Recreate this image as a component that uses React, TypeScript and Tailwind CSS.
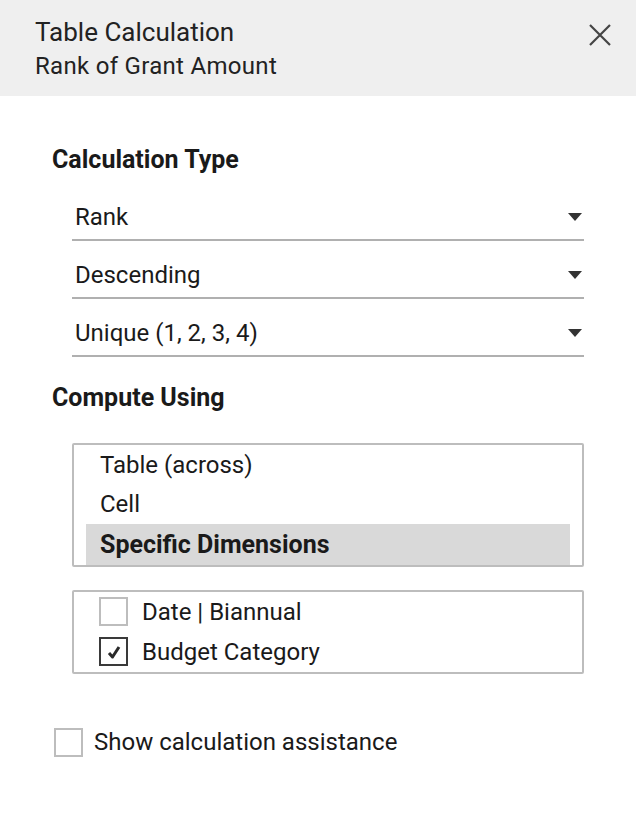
import React from "react";

function Caret() {
  return (
    <svg width="14" height="8" viewBox="0 0 14 8" className="shrink-0 mb-[11px]">
      <path d="M0 0 L14 0 L7 8 Z" fill="#333" />
    </svg>
  );
}

function Select({ label }: { label: string }) {
  return (
    <div className="flex items-end justify-between h-[58px] border-b-[2px] border-[#b0b0b0] pl-[3px] pr-[2px] pb-[7px]">
      <span className="text-[24px] leading-[30px] text-[#1a1a1a]">{label}</span>
      <Caret />
    </div>
  );
}

function Check({ checked }: { checked?: boolean }) {
  return (
    <div
      className={
        "w-[29px] h-[29px] flex items-center justify-center shrink-0 bg-white border-2 " +
        (checked ? "border-[#3a3a3a]" : "border-[#bdbdbd]")
      }
    >
      {checked && (
        <svg width="18" height="16" viewBox="0 0 18 16">
          <path d="M4 9 L7.5 13 L14 3" fill="none" stroke="#2a2a2a" strokeWidth="3" strokeLinejoin="round" />
        </svg>
      )}
    </div>
  );
}

export default function App() {
  return (
    <div
      className="w-[636px] h-[818px] bg-white text-[#1a1a1a]"
      style={{ fontFamily: "Roboto, 'Liberation Sans', sans-serif" }}
    >
      <div className="h-[96px] bg-[#efefef] flex justify-between pl-[35px] pr-[24px] pt-[15px]">
        <div className="flex flex-col">
          <span className="text-[26px] leading-[34px] text-[#222]">Table Calculation</span>
          <span className="text-[24px] leading-[34px] tracking-[0.3px] text-[#222]">Rank of Grant Amount</span>
        </div>
        <svg width="24" height="24" viewBox="0 0 24 24" className="mt-[8px]">
          <path d="M2 2 L22 22 M22 2 L2 22" stroke="#444" strokeWidth="2.2" />
        </svg>
      </div>

      <div className="pl-[52px] pr-[52px] pt-[49px]">
        <div className="text-[25px] font-bold leading-[30px]">Calculation Type</div>
        <div className="pl-[20px] mt-[8px]">
          <Select label="Rank" />
          <Select label="Descending" />
          <Select label="Unique (1, 2, 3, 4)" />
        </div>

        <div className="text-[25px] font-bold leading-[30px] mt-[26px]">Compute Using</div>

        <div className="ml-[20px] mt-[30px] h-[124px] border-2 border-[#bdbdbd] rounded-[2px] px-[12px] overflow-hidden">
          <div className="h-[39px] flex items-center pl-[14px] text-[24px]">Table (across)</div>
          <div className="h-[40px] flex items-center pl-[14px] text-[24px]">Cell</div>
          <div className="h-[41px] flex items-center pl-[14px] text-[25px] font-bold bg-[#d9d9d9]">Specific Dimensions</div>
        </div>

        <div className="ml-[20px] mt-[23px] h-[84px] border-2 border-[#bdbdbd] rounded-[2px] pl-[25px] pt-[5px] flex flex-col gap-[11px]">
          <div className="flex items-center gap-[14px] h-[29px]">
            <Check />
            <span className="text-[24px]">Date | Biannual</span>
          </div>
          <div className="flex items-center gap-[14px] h-[29px]">
            <Check checked />
            <span className="text-[24px]">Budget Category</span>
          </div>
        </div>

        <div className="flex items-center gap-[11px] mt-[50px] ml-[2px]">
          <Check />
          <span className="text-[24px]">Show calculation assistance</span>
        </div>
      </div>
    </div>
  );
}
